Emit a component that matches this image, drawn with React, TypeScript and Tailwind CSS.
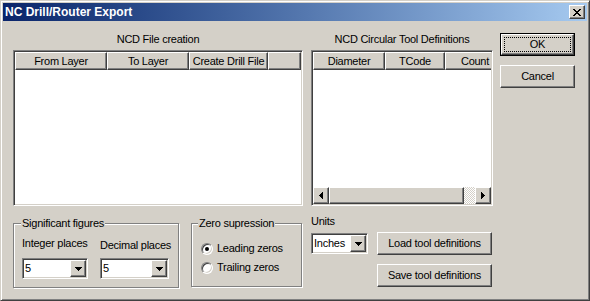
import React from "react";

const raised =
  "border border-t-white border-l-white border-r-[#404040] border-b-[#404040] shadow-[inset_-1px_-1px_0_#808080] bg-[#d4d0c8]";
const sunken =
  "border border-t-[#808080] border-l-[#808080] border-r-white border-b-white shadow-[inset_1px_1px_0_#404040,inset_-1px_-1px_0_#d4d0c8]";

function DownArrow() {
  return (
    <svg width="7" height="4" viewBox="0 0 7 4">
      <path d="M0 0h7v1H0zM1 1h5v1H1zM2 2h3v1H2zM3 3h1v1H3z" fill="#000" />
    </svg>
  );
}

function LeftArrow() {
  return (
    <svg width="4" height="7" viewBox="0 0 4 7">
      <path d="M3 0h1v7H3zM2 1h1v5H2zM1 2h1v3H1zM0 3h1v1H0z" fill="#000" />
    </svg>
  );
}

function RightArrow() {
  return (
    <svg width="4" height="7" viewBox="0 0 4 7">
      <path d="M0 0h1v7H0zM1 1h1v5H1zM2 2h1v3H2zM3 3h1v1H3z" fill="#000" />
    </svg>
  );
}

function DropBtn() {
  return (
    <div className={`w-[16px] h-[17px] flex items-center justify-center shrink-0 ${raised}`}>
      <DownArrow />
    </div>
  );
}

function Radio({ checked, label }: { checked?: boolean; label: string }) {
  return (
    <div className="flex items-center h-[13px]">
      <div className="w-[12px] h-[12px] rounded-full border border-t-[#808080] border-l-[#808080] border-r-white border-b-white bg-white shadow-[inset_1px_1px_0_#404040,inset_-1px_-1px_0_#d4d0c8] flex items-center justify-center shrink-0">
        {checked && <div className="w-[4px] h-[4px] rounded-full bg-black" />}
      </div>
      <span className="ml-[4px]">{label}</span>
    </div>
  );
}

export default function App() {
  return (
    <div className="w-[590px] h-[301px] bg-[#d4d0c8] border border-t-[#d4d0c8] border-l-[#d4d0c8] border-r-[#404040] border-b-[#404040] shadow-[inset_1px_1px_0_#fff,inset_-1px_-1px_0_#808080] p-[2px] flex flex-col text-black font-['Liberation_Sans',Arial,sans-serif] text-[11px] leading-[13px] tracking-[-0.25px] overflow-hidden">
      {/* Title bar */}
      <div className="h-[18px] flex items-center bg-gradient-to-r from-[#0a246a] to-[#a6caf0] shrink-0">
        <span className="pl-[2px] text-white font-bold text-[12px] tracking-normal">NC Drill/Router Export</span>
        <div className="ml-auto mr-[2px] w-[16px] h-[14px] flex items-center justify-center border border-t-white border-l-white border-r-[#404040] border-b-[#404040] shadow-[inset_-1px_-1px_0_#808080] bg-[#d4d0c8]">
          <svg width="8" height="7" viewBox="0 0 8 7">
            <path d="M0 0h2v1H0zM6 0h2v1H6zM1 1h2v1H1zM5 1h2v1H5zM2 2h4v1H2zM3 3h2v1H3zM2 4h4v1H2zM1 5h2v1H1zM5 5h2v1H5zM0 6h2v1H0zM6 6h2v1H6z" fill="#000" />
          </svg>
        </div>
      </div>

      {/* Body */}
      <div className="flex pl-[10px]">
        {/* Left column */}
        <div className="w-[290px] flex flex-col">
          <div className="mt-[12px] h-[13px] text-center">NCD File creation</div>
          <div className={`mt-[4px] w-[290px] h-[156px] bg-white flex flex-col ${sunken} p-[1px]`}>
            <div className="flex h-[18px] shrink-0">
              <div className={`w-[92px] shrink-0 flex items-center justify-center ${raised}`}>From Layer</div>
              <div className={`w-[82px] shrink-0 flex items-center justify-center ${raised}`}>To Layer</div>
              <div className={`w-[79px] shrink-0 flex items-center justify-center whitespace-nowrap ${raised}`}>Create Drill File</div>
              <div className={`flex-1 ${raised}`} />
            </div>
          </div>

          <div className="flex mt-[17px]">
            {/* Significant figures */}
            <div className="relative w-[166px] h-[65px] border border-[#808080] shadow-[inset_1px_1px_0_#fff,1px_1px_0_#fff] flex pl-[8px]">
              <span className="absolute -top-[7px] left-[7px] px-[1px] bg-[#d4d0c8]">Significant figures</span>
              <div className="flex flex-col w-[66px]">
                <span className="mt-[13px] whitespace-nowrap">Integer places</span>
                <div className={`mt-[8px] w-[66px] h-[21px] bg-white flex items-center ${sunken} p-[1px]`}>
                  <span className="flex-1 pl-[1px]">5</span>
                  <DropBtn />
                </div>
              </div>
              <div className="flex flex-col w-[69px] ml-[12px]">
                <span className="mt-[15px] whitespace-nowrap">Decimal places</span>
                <div className={`mt-[6px] w-[69px] h-[21px] bg-white flex items-center ${sunken} p-[1px]`}>
                  <span className="flex-1 pl-[1px]">5</span>
                  <DropBtn />
                </div>
              </div>
            </div>

            {/* Zero supression */}
            <div className="relative ml-[12px] w-[111px] h-[64px] border border-[#808080] shadow-[inset_1px_1px_0_#fff,1px_1px_0_#fff] flex flex-col pl-[9px] pt-[18px] gap-[6px]">
              <span className="absolute -top-[7px] left-[6px] px-[1px] bg-[#d4d0c8]">Zero supression</span>
              <Radio checked label="Leading zeros" />
              <Radio label="Trailing zeros" />
            </div>
          </div>
        </div>

        {/* Middle column */}
        <div className="ml-[8px] w-[182px] flex flex-col">
          <div className="mt-[12px] h-[13px] text-center whitespace-nowrap">NCD Circular Tool Definitions</div>
          <div className={`mt-[4px] w-[182px] h-[156px] bg-white flex flex-col ${sunken} p-[1px]`}>
            <div className="flex h-[18px] shrink-0 overflow-hidden">
              <div className={`w-[72px] shrink-0 flex items-center justify-center ${raised}`}>Diameter</div>
              <div className={`w-[60px] shrink-0 flex items-center justify-center ${raised}`}>TCode</div>
              <div className={`w-[60px] shrink-0 flex items-center justify-center ${raised}`}>Count</div>
            </div>
            <div className="flex-1" />
            <div className="flex h-[17px] shrink-0">
              <div className={`w-[16px] shrink-0 flex items-center justify-center ${raised}`}>
                <LeftArrow />
              </div>
              <div className={`w-[135px] shrink-0 ${raised}`} />
              <div className="flex-1 bg-[repeating-conic-gradient(#d4d0c8_0_25%,#ffffff_0_50%)] bg-[length:2px_2px]" />
              <div className={`w-[16px] shrink-0 flex items-center justify-center ${raised}`}>
                <RightArrow />
              </div>
            </div>
          </div>

          <div className="flex">
            <div className="flex flex-col w-[57px]">
              <span className="mt-[9px]">Units</span>
              <div className={`mt-[5px] w-[57px] h-[21px] bg-white flex items-center ${sunken} p-[1px]`}>
                <span className="flex-1 pl-[1px]">Inches</span>
                <DropBtn />
              </div>
            </div>
            <div className="flex flex-col ml-[9px] w-[115px] mt-[26px] gap-[9px]">
              <div className={`h-[23px] flex items-center justify-center ${raised}`}>Load tool definitions</div>
              <div className={`h-[23px] flex items-center justify-center ${raised}`}>Save tool definitions</div>
            </div>
          </div>
        </div>

        {/* Right column */}
        <div className="ml-[7px] w-[75px] flex flex-col mt-[12px] gap-[9px]">
          <div className="h-[23px] border border-black p-0">
            <div className="h-full border border-t-white border-l-white border-r-[#404040] border-b-[#404040] shadow-[inset_-1px_-1px_0_#808080] flex items-center justify-center p-[2px]">
              <div className="w-full h-full border border-dotted border-black flex items-center justify-center">OK</div>
            </div>
          </div>
          <div className={`h-[23px] flex items-center justify-center ${raised}`}>Cancel</div>
        </div>
      </div>
    </div>
  );
}
